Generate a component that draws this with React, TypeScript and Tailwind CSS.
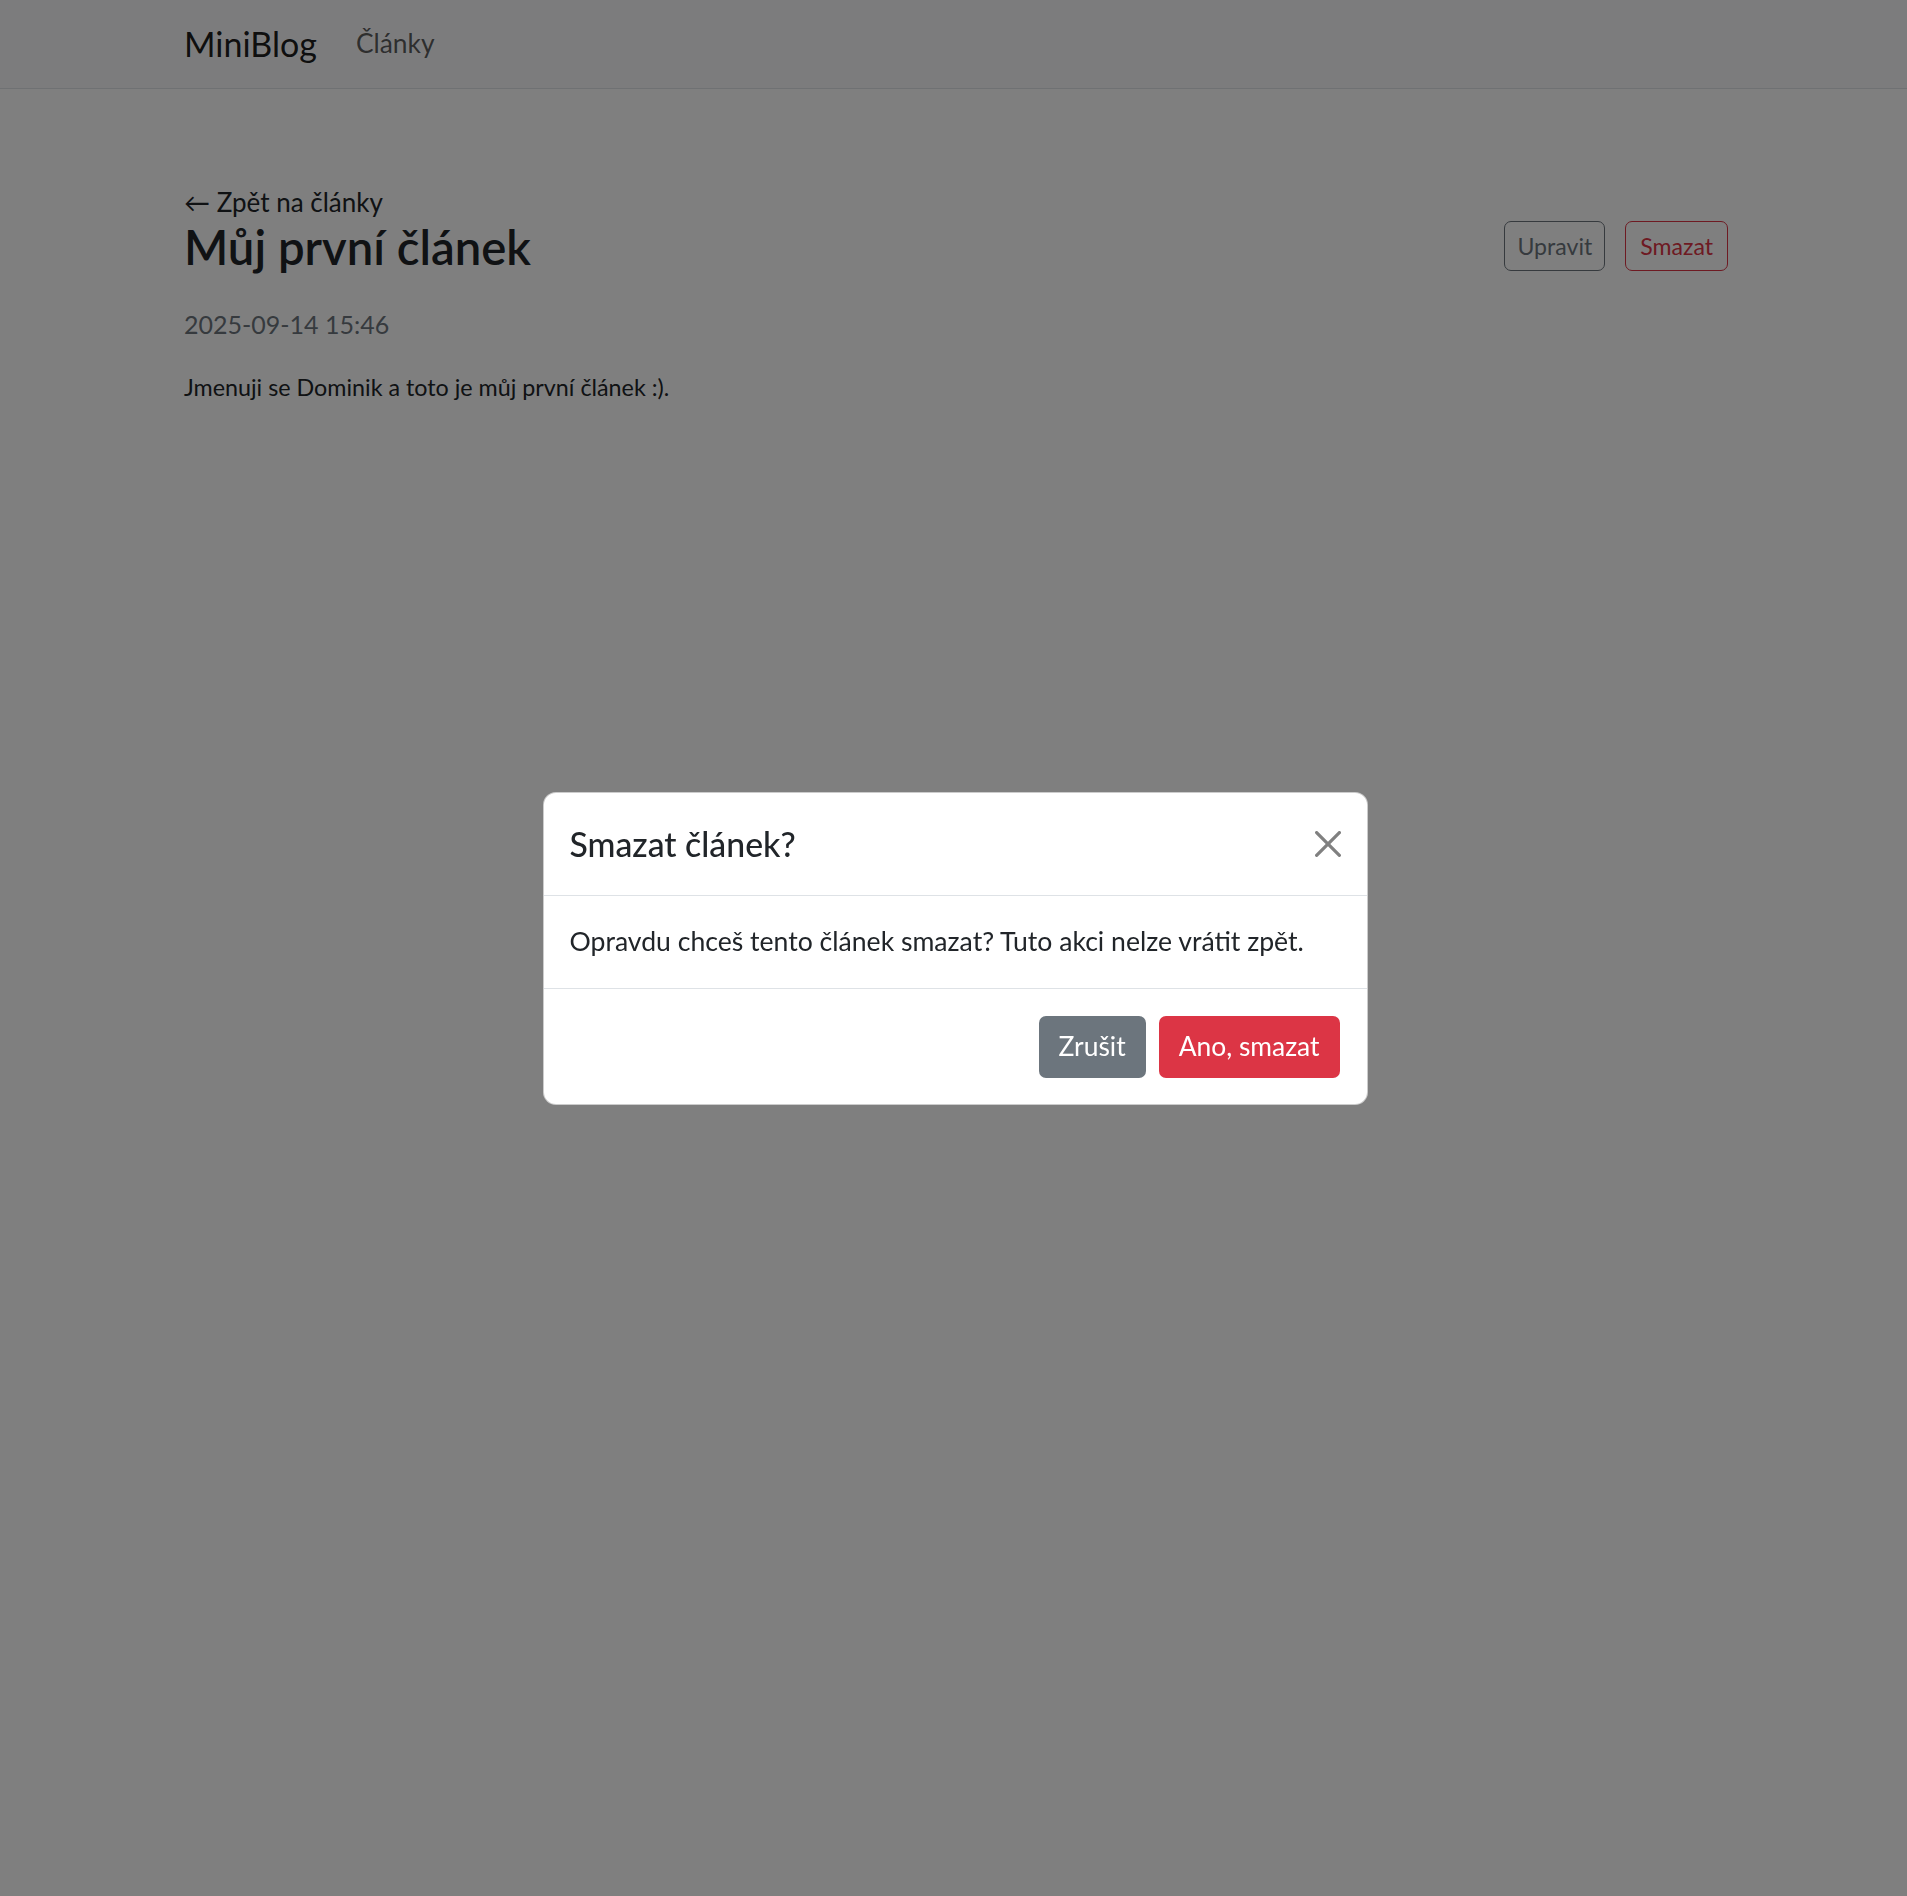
import { useState } from 'react';

const font = { fontFamily: 'Lato, "Noto Sans", sans-serif' };

function CloseIcon() {
  return (
    <svg viewBox="0 0 16 16" className="w-[26px] h-[26px]" fill="#808080">
      <path d="M.293.293a1 1 0 0 1 1.414 0L8 6.586 14.293.293a1 1 0 1 1 1.414 1.414L9.414 8l6.293 6.293a1 1 0 0 1-1.414 1.414L8 9.414l-6.293 6.293a1 1 0 0 1-1.414-1.414L6.586 8 .293 1.707a1 1 0 0 1 0-1.414" />
    </svg>
  );
}

function DeleteModal() {
  return (
    <div className="fixed inset-0 z-20 flex items-center justify-center pl-[3px] pt-[1px]">
      <div className="w-[825px] bg-white rounded-[13px] border border-black/20 text-[#212529]">
        <div className="flex items-center justify-between px-[26px] py-[26px] border-b border-[#dee2e6]">
          <h5 className="text-[33.8px] leading-[1.5] font-medium">Smazat článek?</h5>
          <button className="w-[26px] h-[26px] flex items-center justify-center">
            <CloseIcon />
          </button>
        </div>
        <div className="px-[26px] py-[26px]">
          <p className="text-[26.6px] leading-[1.5]">Opravdu chceš tento článek smazat? Tuto akci nelze vrátit zpět.</p>
        </div>
        <div className="flex justify-end gap-[13px] pl-[26px] pr-[27px] pt-[27px] pb-[26px] border-t border-[#dee2e6]">
          <button className="h-[62px] px-[20px] rounded-[7px] bg-[#6c757d] text-white text-[26.4px] leading-[1.5]">Zrušit</button>
          <button className="h-[62px] px-[20px] rounded-[7px] bg-[#dc3545] text-white text-[26.4px] leading-[1.5]">Ano, smazat</button>
        </div>
      </div>
    </div>
  );
}

export default function App() {
  const [open] = useState(true);

  return (
    <div className="min-h-[1896px] bg-white" style={font}>
      <nav className="h-[89px] bg-[#f8f9fa] border-b border-[#dee2e6]">
        <div className="h-full pl-[184px] pr-[179px] flex items-center">
          <a className="text-[34px] leading-[1.5] text-black/90 mr-[39px] -mt-[2px]">MiniBlog</a>
          <a className="text-[26.4px] leading-[1.5] text-black/65">Články</a>
        </div>
      </nav>

      <main className="pl-[184px] pr-[179px] pt-[94px] text-[#212529]">
        <a className="block text-[26px] leading-[1.5]">← Zpět na články</a>
        <div className="flex items-center justify-between -mt-[3px]">
          <h1 className="text-[47.3px] leading-[1.2] font-semibold">Můj první článek</h1>
          <div className="flex gap-[20px] -mt-[2px]">
            <button className="h-[50px] px-[12px] rounded-[7px] border border-[#6c757d] text-[#6c757d] text-[23.1px] leading-[1.5]">Upravit</button>
            <button className="h-[50px] px-[14px] rounded-[7px] border border-[#dc3545] text-[#dc3545] text-[23.1px] leading-[1.5]">Smazat</button>
          </div>
        </div>
        <p className="mt-[30px] text-[25px] leading-[1.5] text-[#6c757d]">2025-09-14 15:46</p>
        <p className="mt-[27px] text-[23.3px] leading-[1.5]">Jmenuji se Dominik a toto je můj první článek :).</p>
      </main>

      {open && (
        <>
          <div className="fixed inset-0 z-10 bg-black/50" />
          <DeleteModal />
        </>
      )}
    </div>
  );
}
